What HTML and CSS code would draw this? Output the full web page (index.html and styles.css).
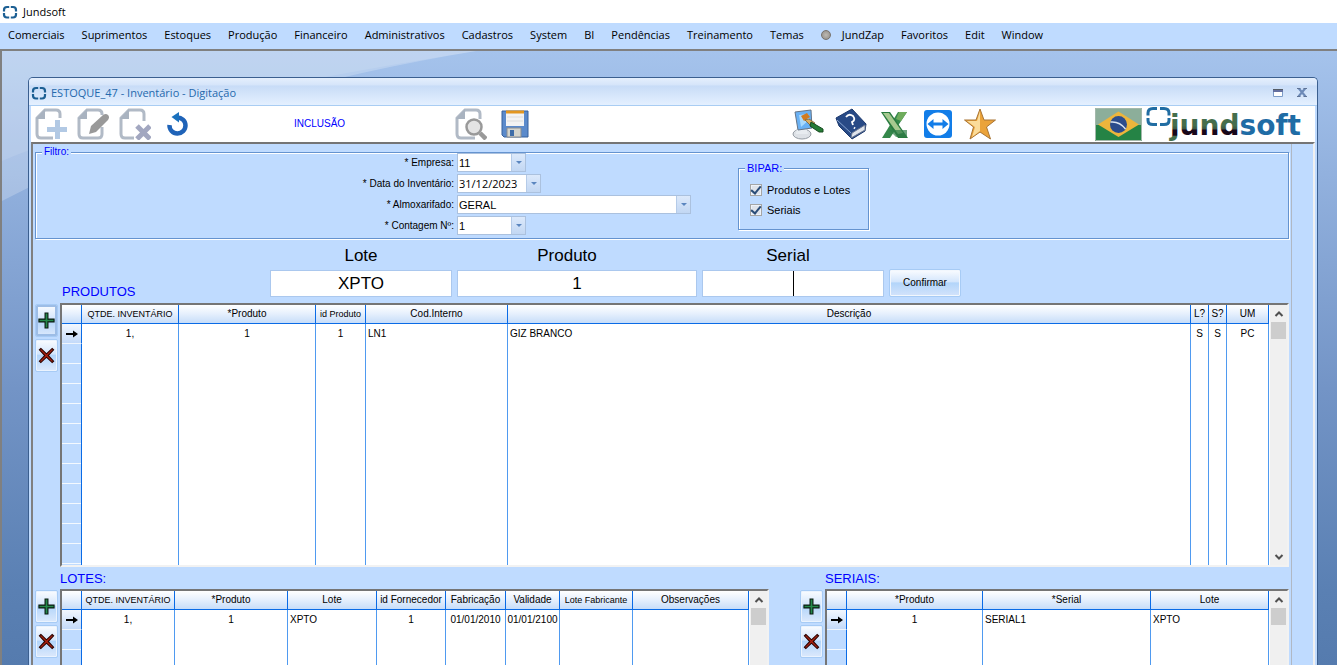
FILE: index.html
```html
<!DOCTYPE html>
<html lang="pt-BR">
<head>
<meta charset="utf-8">
<title>Jundsoft</title>
<link rel="stylesheet" href="styles.css">
</head>
<body>
<svg class="defs" aria-hidden="true">
  <defs>
    <symbol id="ring" viewBox="0 0 16 16"><path d="M7.200 3H5Q2 3 2 6v1.500M8.800 3H11Q14 3 14 6v1.500M7.200 13.500H5Q2 13.500 2 10.500V9M8.800 13.500H11Q14 13.500 14 10.500V9" fill="none" stroke="#1c5f93" stroke-width="2.200"/></symbol>
    <symbol id="add" viewBox="0 0 18 18"><path d="M7.500 1h3v6.500H17v3h-6.500V17h-3v-6.500H1v-3h6.500z" fill="#23894a" stroke="#0a1a10" stroke-width="1.200"/></symbol>
    <symbol id="del" viewBox="0 0 18 18"><path d="M3 1.500L9 7.200 15 1.500 16.500 3 10.800 9 16.500 15 15 16.500 9 10.800 3 16.500 1.500 15 7.200 9 1.500 3z" fill="#b0200e" stroke="#2a0400" stroke-width="1.200"/></symbol>
    <symbol id="row-arrow" viewBox="0 0 14 12"><path d="M1 5h7V2.500L13 6 8 9.500V7H1z"/></symbol>
    <symbol id="up" viewBox="0 0 10 10"><path d="M1.500 7L5 3.500 8.500 7" fill="none" stroke="#505050" stroke-width="2"/></symbol>
    <symbol id="down" viewBox="0 0 10 10"><path d="M1.500 3L5 6.500 8.500 3" fill="none" stroke="#505050" stroke-width="2"/></symbol>
  </defs>
</svg>

<header class="app-title"><svg class="ring"><use href="#ring"/></svg><span>Jundsoft</span></header>
<nav class="menu">
  <a href="#">Comerciais</a><a href="#">Suprimentos</a><a href="#">Estoques</a><a href="#">Produção</a><a href="#">Financeiro</a><a href="#">Administrativos</a><a href="#">Cadastros</a><a href="#">System</a><a href="#">BI</a><a href="#">Pendências</a><a href="#">Treinamento</a><a href="#">Temas</a><a href="#" class="zap"><i class="dot"></i>JundZap</a><a href="#">Favoritos</a><a href="#">Edit</a><a href="#">Window</a>
</nav>

<main class="workspace">
  <svg class="swoosh" viewBox="0 0 1337 614" preserveAspectRatio="none" aria-hidden="true">
    <path d="M0 0H475Q200 45 0 150z" fill="#fff" opacity=".22"/>
    <path d="M0 0H475Q130 55 0 110z" fill="#fff" opacity=".1"/>
  </svg>
  <section class="window">
    <div class="window-title">
      <svg class="ring"><use href="#ring"/></svg><h1>ESTOQUE_47 - Inventário - Digitação</h1>
      <button class="win-btn" aria-label="Restaurar"><svg width="10" height="8" viewBox="0 0 10 8"><path d="M.5.5h9v7h-9z" fill="#fff" stroke="#7c9cc8"/><path d="M0 0h10v3H0z" fill="#6570a0"/><path d="M0 0h10v1H0z" fill="#555c66"/></svg></button>
      <button class="win-btn" aria-label="Fechar"><svg width="10" height="9" viewBox="0 0 10 9"><path d="M1.500 0L8.500 8.500M8.500 0L1.500 8.500" stroke="#6d8ab8" stroke-width="2.200"/><path d="M0 .5h3.500M6.500.5H10M0 8.500h3.500M6.500 8.500H10" stroke="#5e7396"/></svg></button>
    </div>

    <div class="toolbar">
      <div class="tools">
        <button aria-label="Novo"><svg viewBox="0 0 32 32"><path d="M25 10V6Q25 2 21 2H10L2 10V26Q2 30 6 30H18" fill="none" stroke="#b1bac6" stroke-width="3"/><path d="M10 1v10H1z" fill="#a9b3c0"/><path d="M20 12h5v7h7v5h-7v7h-5v-7h-8v-5h8z" fill="#b2c9e4"/></svg></button>
        <button aria-label="Editar"><svg viewBox="0 0 32 32"><path d="M25 7V6Q25 2 21 2H10L2 10V26Q2 30 6 30H21Q25 30 25 26V19" fill="none" stroke="#b1bac6" stroke-width="3"/><path d="M10 1v10H1z" fill="#a9b3c0"/><path d="M12 26l2-8L26 7q3-2 5 0 2 2 0 5L19 24z" fill="#999"/></svg></button>
        <button aria-label="Excluir"><svg viewBox="0 0 32 32"><path d="M25 13V6Q25 2 21 2H10L2 10V26Q2 30 6 30H15" fill="none" stroke="#b1bac6" stroke-width="3"/><path d="M10 1v10H1z" fill="#a9b3c0"/><path d="M18 18L31 31M31 18L18 31" stroke="#a2a7c0" stroke-width="5"/></svg></button>
        <button aria-label="Desfazer"><svg viewBox="0 0 32 32"><path d="M8.500 17A8 8 0 1 0 16 9.500" fill="none" stroke="#1f63b8" stroke-width="4.500"/><path d="M10.500 9L18 4V14.500z" fill="#1a71bd"/></svg></button>
      </div>
      <span class="mode">INCLUSÃO</span>
      <div class="tools search-tools">
        <button aria-label="Pesquisar"><svg viewBox="0 0 32 32"><path d="M25 11V6Q25 2 21 2H10L2 10V26Q2 30 6 30H20" fill="none" stroke="#b1bac6" stroke-width="3"/><path d="M10 1v10H1z" fill="#a9b3c0"/><circle cx="19" cy="19" r="7.500" fill="#e4e4e4" stroke="#999" stroke-width="2.500"/><path d="M25 25l6 6" stroke="#999" stroke-width="4.500"/></svg></button>
        <button aria-label="Salvar"><svg viewBox="0 0 32 32"><path d="M3 3h26v26H5l-2-2z" fill="#5b8acb" stroke="#36609c"/><path d="M7 3h18v15H7z" fill="#f3f3f3"/><path d="M7 2.500h18v3H7z" fill="#e3961f"/><path d="M8 9h16M8 13h16" stroke="#ddd"/><path d="M8 20h14v9H8z" fill="#d4d4cd" stroke="#8a8d90"/><path d="M11 22h4v6h-4z" fill="#3f6da8"/></svg></button>
      </div>
      <div class="tools link-tools">
        <button aria-label="Aparência"><svg viewBox="0 0 32 32"><ellipse cx="10" cy="26" rx="9" ry="5" fill="#dde1e6" stroke="#949ba3"/><path d="M5 19h9l2 7H4z" fill="#e8ecf0"/><path d="M3 4l16-2 1 18-14 2z" fill="#69b1f4" stroke="#647386"/><path d="M7 7l9-1 1 6-8 7z" fill="#a9dafd"/><path d="M9 8l6-3 3 4-6 4z" fill="#d17b20"/><path d="M13 12l4-1 6 4-3 4z" fill="#dcaf62" stroke="#735326" stroke-width=".7"/><path d="M19 14l12 7v3h-4l-9-6z" fill="#267c35" stroke="#164a20"/></svg></button>
        <button aria-label="Ajuda"><svg viewBox="0 0 32 32"><path d="M1 10L17 1l14 15-1 7-13 8L4 18z" fill="#284a86" stroke="#1a376c"/><path d="M30 17l-13 8-1 5 14-8z" fill="#e1e5ec" stroke="#6c7a94"/><path d="M2 12l14 13" stroke="#85a2cf"/><path d="M11 9q3-4 7-1 3 4-1 6l1 3M19 19.500l1 1" fill="none" stroke="#fff" stroke-width="1.800"/></svg></button>
        <button aria-label="Excel"><svg viewBox="0 0 32 32"><path d="M20 4h9L12 30H4z" fill="#35884b"/><path d="M21 4h8l-6 9-5-2z" fill="#6fac5c"/><path d="M3 4h9l18 26H20z" fill="#287a3f"/><path d="M5 5h6l14 20-5 1z" fill="#a6c98f"/><path d="M11 22h18v7H18z" fill="#307d48" opacity=".7"/></svg></button>
        <button aria-label="Acesso remoto"><svg viewBox="0 0 32 32"><rect x="3" y="2" width="28" height="28" rx="3" fill="#127de8"/><circle cx="17" cy="16" r="11.500" fill="#fff"/><path d="M6.500 16l6-5v3.500h9V11l6 5-6 5v-3.500h-9V21z" fill="#127de8"/></svg></button>
        <button aria-label="Favoritos"><svg viewBox="0 0 32 32"><path d="M16 1l4 11h11.500l-9 7 4 12L16 24 6 31l3.500-12-9-7H12z" fill="#eba33a" stroke="#a87535"/><path d="M16 3v20l-8 6 3-10-8-6h10z" fill="#fbdc9a"/></svg></button>
      </div>
      <div class="brand">
        <svg class="flag" viewBox="0 0 47 33"><path d="M0 0h47v33H0z" fill="#258345"/><path d="M0 0h47v17H0z" fill="#8cae9a"/><path d="M23.500 3.500L44 16.500 23.500 29 3 16.500z" fill="#edb53c"/><circle cx="23.500" cy="16.500" r="8.500" fill="#2c4c8c"/><path d="M15.500 14q9-1 15 7" stroke="#dce5f2" stroke-width="1.500" fill="none"/><path d="M.5.5h46v32H.5z" fill="none" stroke="#a3b8ab"/></svg>
        <svg class="logo" viewBox="0 0 158 36" role="img" aria-label="jundsoft">
          <defs><linearGradient id="ink" x1="0" y1="0" x2="0" y2="1"><stop offset=".5" stop-color="#456e4c"/><stop offset=".6" stop-color="#3c5740"/><stop offset=".64" stop-color="#180719"/><stop offset=".8" stop-color="#180719"/><stop offset=".81" stop-color="#456e4c"/></linearGradient></defs>
          <path d="M12 2.500H8Q3 2.500 3 7V9.500M15 2.500H19Q24 2.500 24 7V9.500M12 18.500H8Q3 18.500 3 14.500V12M15 18.500H19Q24 18.500 24 14.500V12" fill="none" stroke="#216da3" stroke-width="3"/>
          <text x="25" y="29" fill="url(#ink)">jund<tspan fill="#1f6ca5">soft</tspan></text>
        </svg>
      </div>
    </div>

    <div class="body">
      <div class="panel">
        <fieldset class="group filter">
          <legend>Filtro:</legend>
          <div class="filter-row">
            <div class="form">
              <label for="empresa">* Empresa:</label>
              <span class="combo w-code"><select id="empresa"><option>11</option></select><i></i></span>
              <label for="data">* Data do Inventário:</label>
              <span class="combo w-date"><select id="data"><option>31/12/2023</option></select><i></i></span>
              <label for="almox">* Almoxarifado:</label>
              <span class="combo w-store"><select id="almox"><option>GERAL</option></select><i></i></span>
              <label for="contagem">* Contagem Nº:</label>
              <span class="combo w-code"><select id="contagem"><option>1</option></select><i></i></span>
            </div>
            <fieldset class="group bipar">
              <legend>BIPAR:</legend>
              <label><input type="checkbox" checked>Produtos e Lotes</label>
              <label><input type="checkbox" checked>Seriais</label>
            </fieldset>
          </div>
        </fieldset>

        <div class="entry">
          <h2>PRODUTOS</h2>
          <div class="field"><label for="lote">Lote</label><input id="lote" value="XPTO"></div>
          <div class="field wide"><label for="produto">Produto</label><input id="produto" value="1"></div>
          <div class="field last"><label for="serial">Serial</label><span class="caret-box"><input id="serial"><i class="caret"></i></span></div>
          <button class="confirm">Confirmar</button>
        </div>

        <div class="block products">
          <div class="side">
            <button class="focused" aria-label="Adicionar produto"><svg><use href="#add"/></svg></button>
            <button aria-label="Remover produto"><svg><use href="#del"/></svg></button>
          </div>
          <div class="grid">
            <table>
              <colgroup><col class="c20"><col class="c97"><col class="c137"><col class="c50"><col class="c142"><col><col class="c18"><col class="c18"><col class="c42"></colgroup>
              <thead><tr><th></th><th class="tight">QTDE. INVENTÁRIO</th><th>*Produto</th><th class="tight">id Produto</th><th>Cod.Interno</th><th>Descrição</th><th>L?</th><th>S?</th><th>UM</th></tr></thead>
              <tbody>
                <tr><th><svg><use href="#row-arrow"/></svg></th><td>1,</td><td>1</td><td>1</td><td class="left">LN1</td><td class="left">GIZ BRANCO</td><td>S</td><td>S</td><td>PC</td></tr>
                <tr class="rest"><th></th><td></td><td></td><td></td><td></td><td></td><td></td><td></td><td></td></tr>
              </tbody>
            </table>
            <div class="scroll"><button aria-label="Subir"><svg><use href="#up"/></svg></button><i class="thumb"></i><button aria-label="Descer"><svg><use href="#down"/></svg></button></div>
          </div>
        </div>

        <div class="details">
          <div class="detail lots">
            <h2>LOTES:</h2>
            <div class="block">
              <div class="side">
                <button aria-label="Adicionar lote"><svg><use href="#add"/></svg></button>
                <button aria-label="Remover lote"><svg><use href="#del"/></svg></button>
              </div>
              <div class="grid">
                <table>
                  <colgroup><col class="c20"><col class="c93"><col class="c113"><col class="c89"><col class="c69"><col class="c60"><col class="c54"><col class="c73"><col></colgroup>
                  <thead><tr><th></th><th class="tight">QTDE. INVENTÁRIO</th><th>*Produto</th><th>Lote</th><th>id Fornecedor</th><th>Fabricação</th><th>Validade</th><th class="tight">Lote Fabricante</th><th>Observações</th></tr></thead>
                  <tbody>
                    <tr><th><svg><use href="#row-arrow"/></svg></th><td>1,</td><td>1</td><td class="left">XPTO</td><td>1</td><td>01/01/2010</td><td>01/01/2100</td><td></td><td></td></tr>
                    <tr class="rest"><th></th><td></td><td></td><td></td><td></td><td></td><td></td><td></td><td></td></tr>
                  </tbody>
                </table>
                <div class="scroll"><button aria-label="Subir"><svg><use href="#up"/></svg></button><i class="thumb"></i></div>
              </div>
            </div>
          </div>
          <div class="detail serials">
            <h2>SERIAIS:</h2>
            <div class="block">
              <div class="side">
                <button aria-label="Adicionar serial"><svg><use href="#add"/></svg></button>
                <button aria-label="Remover serial"><svg><use href="#del"/></svg></button>
              </div>
              <div class="grid">
                <table>
                  <colgroup><col class="c20"><col class="c136"><col class="c168"><col></colgroup>
                  <thead><tr><th></th><th>*Produto</th><th>*Serial</th><th>Lote</th></tr></thead>
                  <tbody>
                    <tr><th><svg><use href="#row-arrow"/></svg></th><td>1</td><td class="left">SERIAL1</td><td class="left">XPTO</td></tr>
                    <tr class="rest"><th></th><td></td><td></td><td></td></tr>
                  </tbody>
                </table>
                <div class="scroll"><button aria-label="Subir"><svg><use href="#up"/></svg></button><i class="thumb"></i></div>
              </div>
            </div>
          </div>
        </div>
      </div>
    </div>
  </section>
</main>
</body>
</html>
```
FILE: styles.css
```css
* { box-sizing: border-box; }
body {
  margin: 0;
  height: 100vh;
  display: flex;
  flex-direction: column;
  overflow: hidden;
  background: #fff;
  color: #000;
  font: 10px/14px "Liberation Sans", Arial, sans-serif;
}
button, input, select { font: inherit; color: inherit; margin: 0; padding: 0; }
h1, h2 { margin: 0; font-weight: normal; }
fieldset { margin: 0; min-width: 0; }
.defs { position: absolute; width: 0; height: 0; }
.ring { width: 16px; height: 16px; flex: none; }

.app-title {
  flex: none; height: 23px; padding-left: 2px;
  display: flex; align-items: center; gap: 5px;
  font: 11px/16px "Open Sans", sans-serif;
}
.menu {
  flex: none; height: 26px; padding: 0 8px 2px;
  display: flex; align-items: center; gap: 17px;
  background: #bfdbff;
  font: 11px/20px "Open Sans", sans-serif;
}
.menu a { color: #000; text-decoration: none; white-space: nowrap; }
.zap { display: flex; align-items: center; gap: 11px; }
.dot {
  width: 10px; height: 10px; border-radius: 50%;
  border: 1px solid #77726c;
  background: radial-gradient(#bdb9b2, #8f8b86);
}

.workspace {
  position: relative;
  flex: 1; min-height: 0;
  display: flex;
  padding: 26px 19px 0 26px;
  border: 2px solid #808080; border-right: 0; border-bottom: 0;
  background: linear-gradient(#a5c3ec, #92b1de 20%, #7394c6 55%, #5a80b3 88%, #557bae);
  overflow: hidden;
}
.swoosh { position: absolute; top: 0; left: 0; width: 100%; height: 100%; }
.window {
  position: relative;
  flex: 1; min-width: 0;
  display: flex; flex-direction: column;
  border: 1px solid #3b5f8f; border-bottom: 0;
  border-radius: 5px 5px 0 0;
  background: #bfdbff;
}
.window-title {
  flex: none; height: 28px; padding: 2px 6px 0 2px;
  display: flex; align-items: center; gap: 4px;
  border-radius: 4px 4px 0 0;
  border-bottom: 1px solid #a9cdf3;
  background: linear-gradient(#e5effd 0, #d6e5fa 25%, #c8dcf7 30%, #e4f0ff 100%);
  color: #2569ad;
}
.window-title h1 { flex: 1; font: 11px/16px "Open Sans", sans-serif; }
.win-btn { width: 20px; height: 18px; display: grid; place-items: center; border: 0; background: none; }
.win-btn + .win-btn { margin-right: -1px; }

.toolbar {
  flex: none; height: 36px; margin: 0 2px;
  padding: 0 12px 0 4px;
  display: flex; align-items: center;
  background: #fff;
}
.tools { flex: none; display: flex; gap: 10px; }
.tools button { width: 32px; height: 32px; border: 0; background: none; }
.tools svg { display: block; width: 32px; height: 32px; }
.mode { margin-left: 101px; color: #00f; }
.search-tools { margin-left: 110px; gap: 12px; }
.link-tools { gap: 11px; margin-left: 261px; }
.brand { margin-left: auto; display: flex; align-items: center; gap: 3px; }
.flag { width: 47px; height: 33px; }
.logo { width: 158px; height: 36px; font: bold 28px "DejaVu Sans", sans-serif; }

.body {
  flex: 1; min-height: 0;
  display: flex;
  margin: 0 2px;
  padding-right: 21px;
  border: 2px solid; border-bottom: 0;
  border-color: #757575 #f0f0f0 #757575 #808080;
}
.panel {
  flex: 1; min-width: 0;
  display: flex; flex-direction: column;
  padding: 1px 2px 0;
  border-right: 1px solid #b0b8c4;
}
.group {
  border: 1px solid #6593cf;
  box-shadow: 1px 1px 0 #fff, inset 1px 1px 0 #fff;
  padding: 0;
}
.group legend { margin-left: 6px; padding: 0 2px; color: #00f; background: #bfdbff; }
.filter { flex: none; height: 94px; }
.filter-row { display: flex; gap: 47px; margin-top: -6px; }
.form {
  display: grid;
  grid-template-columns: 418px 234px;
  grid-auto-rows: 19px;
  column-gap: 3px; row-gap: 2px;
  align-items: center;
}
.form label { text-align: right; }
.combo { position: relative; height: 19px; display: block; }
.combo select {
  appearance: none;
  display: block; width: 100%; height: 19px;
  padding: 0 16px 0 1px;
  border: 1px solid #abc1de; border-radius: 0;
  background: #fff;
  font-size: 11px;
}
.combo i {
  position: absolute; top: 1px; right: 1px;
  width: 14px; height: 17px;
  display: grid; place-items: center;
  border-left: 1px solid #b5cbe8;
  background: linear-gradient(#dce9fb, #c2d7f3);
  pointer-events: none;
}
.combo i::before {
  content: "";
  border: 3px solid transparent; border-bottom: 0;
  border-top-color: #5b86bf;
}
.w-code { width: 69px; }
.w-date { width: 84px; }
.w-date select { font-family: "Open Sans", sans-serif; }
.bipar { width: 131px; height: 69px; margin-top: 8px; font-size: 11px; }
.bipar legend { margin-left: 6px; }
.bipar legend + label { margin-top: 5px; }
.bipar label { display: flex; align-items: center; gap: 5px; height: 20px; padding-left: 11px; }
.bipar input {
  appearance: none;
  display: grid; place-items: center;
  width: 12px; height: 12px;
  border: 1px solid #a5a5a5;
  outline: 1px solid #eef3fa; outline-offset: -2px;
  background: #dfe3ea;
}
.bipar input:checked::before {
  content: "";
  width: 4px; height: 8px; margin-top: -2px;
  border: solid #2b4d78; border-width: 0 2px 2px 0;
  transform: rotate(40deg);
}

.entry {
  flex: none; height: 64px; padding-bottom: 6px;
  display: flex; align-items: flex-end; gap: 5px;
}
h2 { color: #00f; font-size: 13px; line-height: 16px; }
.entry h2 { width: 230px; padding-left: 27px; margin-bottom: -3px; }
.field { width: 182px; text-align: center; }
.field.wide { width: 240px; }
.field label { display: block; font-size: 17px; line-height: 20px; margin-bottom: 4px; }
.field.wide label { padding-right: 20px; }
.field.last label { padding-right: 10px; }
.field input {
  display: block; width: 100%; height: 27px;
  border: 1px solid #abc8ee; background: #fff;
  font-size: 17px; text-align: center;
}
.caret-box { display: block; position: relative; }
.caret { position: absolute; left: 50%; top: 1px; width: 1px; height: 25px; background: #000; }
button.confirm {
  width: 72px; height: 28px;
  border: 1px solid #a7cbf5; border-radius: 2px;
  box-shadow: inset 0 0 0 1px #f2f7fd;
  background: linear-gradient(#fafcff, #d4e6fc 45%, #b3d5fa 50%, #d3e3fb);
}

.block { display: flex; gap: 2px; min-height: 0; }
.products { flex: none; height: 264px; }
.side { flex: none; width: 23px; display: flex; flex-direction: column; gap: 2px; padding-top: 1px; }
.side button {
  height: 33px;
  display: grid; place-items: center;
  border: 1px solid #a7cbf5; border-radius: 2px;
  box-shadow: inset 0 0 0 1px #eaf3fe;
  background: linear-gradient(#fafcff, #d4e6fc 45%, #b3d5fa 50%, #dce9fc);
}
.side button.focused { box-shadow: inset 0 0 0 2px #9dbde6; }
.side svg { width: 17px; height: 17px; }

.grid {
  flex: 1; min-width: 0;
  display: flex; gap: 1px;
  border: 2px solid; border-color: #757575 #f2f2f2 #f2f2f2 #757575;
  background: #fff;
  overflow: hidden;
}
table { flex: 1; width: 0; height: 100%; table-layout: fixed; border-collapse: separate; border-spacing: 0; }
th, td { height: 20px; padding: 0; font-weight: normal; text-align: center; white-space: nowrap; overflow: hidden; border-right: 1px solid #4f9af0; line-height: 14px; }
thead th { height: 19px; border-right-color: #0a6be6; border-bottom: 1px solid #0a6be6; background: linear-gradient(#fff, #e8f1fd 45%, #c7ddf9); }
th.tight { font-size: 9px; }
td.left { text-align: left; padding-left: 2px; }
tbody th { border-right-color: #0a6be6; border-bottom: 1px solid #eff5fd; background: linear-gradient(#f2f7fe, #c3dafa); }
tbody svg { display: block; width: 14px; height: 12px; margin: 0 auto; }
.rest th, .rest td { height: auto; }
.rest th { border-bottom: 0; background: repeating-linear-gradient(#bfdbff 0 19px, #f4f9ff 19px 20px); }
.c18 { width: 18px; } .c20 { width: 20px; } .c42 { width: 42px; } .c50 { width: 50px; }
.c54 { width: 54px; } .c60 { width: 60px; } .c69 { width: 69px; } .c73 { width: 73px; }
.c89 { width: 89px; } .c93 { width: 93px; } .c97 { width: 97px; } .c113 { width: 113px; }
.c136 { width: 136px; } .c137 { width: 137px; } .c142 { width: 142px; } .c168 { width: 168px; }

.scroll { flex: none; width: 17px; padding: 0 1px; display: flex; flex-direction: column; background: #f0f0f0; }
.scroll button { height: 17px; display: grid; place-items: center; border: 0; background: none; }
.scroll svg { width: 10px; height: 10px; }
.thumb { height: 17px; background: #cdcdcd; }
.thumb + button { margin-top: auto; }

.details { flex: 1; min-height: 0; margin-bottom: -4px; display: flex; gap: 31px; }
.detail { min-width: 0; display: flex; flex-direction: column; }
.detail h2 { height: 22px; padding: 4px 0 0 25px; }
.detail .block { flex: 1; }
.lots { flex: 734; }
.serials { flex: 489; }
```
